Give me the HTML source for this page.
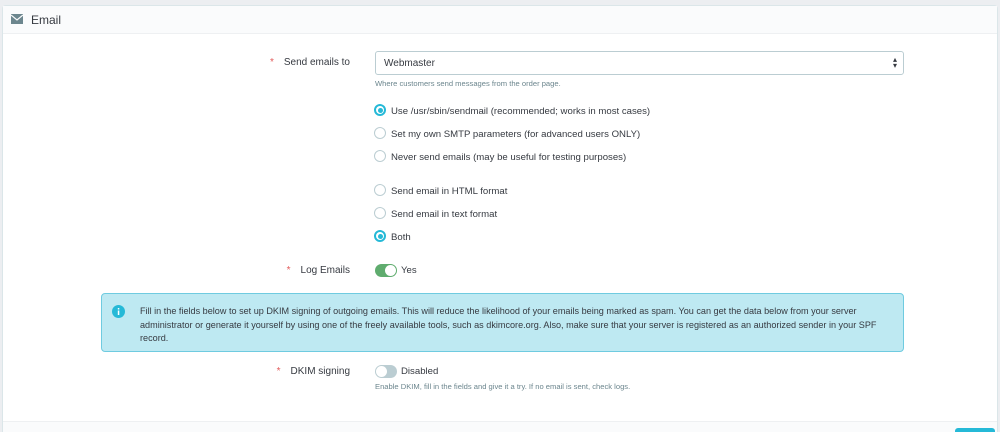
<!DOCTYPE html>
<html><head><meta charset="utf-8"><style>
*{box-sizing:border-box;margin:0;padding:0}
html,body{width:1000px;height:432px;overflow:hidden}
body{background:#eceef1;font-family:"Liberation Sans",sans-serif;color:#363a41;font-size:11px;position:relative}
.panel{position:absolute;left:2px;top:5px;width:996px;height:432px;background:#fff;border:1px solid #dbe6e9;border-radius:4px}
.hd{height:28px;background:#fafbfc;border-bottom:1px solid #eef0f2;position:relative}
.hd span{position:absolute;left:28px;top:7px;font-size:12px;color:#363a41}
.abs{position:absolute}
.lbl{position:absolute;right:650px;font-size:10px;color:#363a41}
.lbl b{color:#e25a5a;font-weight:normal;margin-right:10px}
.sel{position:absolute;left:375px;top:51px;width:529px;height:24px;border:1px solid #bbcdd2;border-radius:3px;padding:6px 8px;font-size:10px}
.help{position:absolute;left:375px;font-size:7.6px;color:#6c868e}
.r{position:absolute;left:374px;font-size:9.6px;color:#363a41}
.r i{display:inline-block;width:12px;height:12px;border:1px solid #bbcdd2;border-radius:50%;vertical-align:-2px;margin-right:5px;position:relative}
.r i.on{border-color:#25b9d7;border-width:2px}
.r i.on:after{content:"";position:absolute;left:1.5px;top:1.5px;width:5px;height:5px;border-radius:50%;background:#25b9d7}
.tg{position:absolute;left:375px;width:22px;height:13px;border-radius:7px}
.alert{position:absolute;left:101px;top:293px;width:803px;height:59px;background:#bee9f2;border:1px solid #6fcbe0;border-radius:4px}
.alert p{position:absolute;left:38px;top:11px;width:762px;font-size:9.1px;line-height:13.5px;color:#363a41}
</style></head><body>
<div class="panel">
<div class="hd">
<svg class="abs" style="left:8px;top:8px" width="12" height="10" viewBox="0 0 12 10"><rect width="12" height="10" fill="#6c868e"/><path d="M0 1 L6 6 L12 1" stroke="#fafbfc" stroke-width="1.2" fill="none"/></svg>
<span>Email</span></div>
</div>
<div class="lbl" style="top:57px"><b>*</b>Send emails to</div>
<div class="sel">Webmaster<span style="position:absolute;right:6px;top:5px;font-size:8px;line-height:6px">▴<br>▾</span></div>
<div class="help" style="top:79px">Where customers send messages from the order page.</div>
<div class="r" style="top:104px"><i class="on"></i>Use /usr/sbin/sendmail (recommended; works in most cases)</div>
<div class="r" style="top:127px"><i></i>Set my own SMTP parameters (for advanced users ONLY)</div>
<div class="r" style="top:150px"><i></i>Never send emails (may be useful for testing purposes)</div>
<div class="r" style="top:184px"><i></i>Send email in HTML format</div>
<div class="r" style="top:207px"><i></i>Send email in text format</div>
<div class="r" style="top:230px"><i class="on"></i>Both</div>
<div class="lbl" style="top:265px"><b>*</b>Log Emails</div>
<div class="tg" style="top:264px;background:#5fac6e"><span style="position:absolute;left:10px;top:1px;width:11px;height:11px;border-radius:50%;background:#fff"></span></div>
<div class="abs" style="left:401px;top:265px;font-size:9.6px">Yes</div>
<div class="alert"><svg class="abs" style="left:10px;top:11px" width="13" height="13"><circle cx="6.5" cy="6.5" r="6.5" fill="#25b9d7"/><rect x="5.8" y="5.5" width="1.5" height="4.5" fill="#fff"/><rect x="5.8" y="3" width="1.5" height="1.5" fill="#fff"/></svg><p>Fill in the fields below to set up DKIM signing of outgoing emails. This will reduce the likelihood of your emails being marked as spam. You can get the data below from your server administrator or generate it yourself by using one of the freely available tools, such as dkimcore.org. Also, make sure that your server is registered as an authorized sender in your SPF record.</p></div>
<div class="lbl" style="top:366px"><b>*</b>DKIM signing</div>
<div class="tg" style="top:365px;background:#bbcdd2"><span style="position:absolute;left:1px;top:1px;width:11px;height:11px;border-radius:50%;background:#fff"></span></div>
<div class="abs" style="left:401px;top:366px;font-size:9.6px">Disabled</div>
<div class="help" style="top:382px">Enable DKIM, fill in the fields and give it a try. If no email is sent, check logs.</div>
<div class="abs" style="left:3px;top:421px;width:994px;height:11px;background:#fafbfc;border-top:1px solid #eef0f2"></div>
<div class="abs" style="left:955px;top:428px;width:40px;height:10px;background:#25b9d7;border-radius:3px"></div>
</body></html>
